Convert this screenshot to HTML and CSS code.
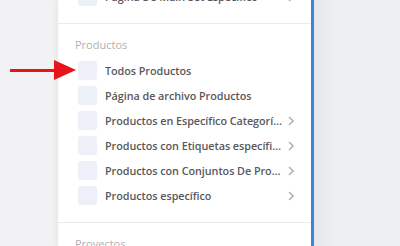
FILE: index.html
```html
<!DOCTYPE html>
<html>

<head>
    <title>Condiciones</title>
    <link rel="stylesheet" href="styles.css">
</head>

<body>
    <div class="gutter"></div>
    <div class="panel">
        <div class="section first">
            <div class="row">
                <span class="check"></span>
                <span class="label">Página De Main Set Específico</span>
                <svg class="chev" width="6" height="10" viewBox="0 0 6 10"><path d="M1 1l4 4-4 4" fill="none" stroke="#b4b4b8" stroke-width="1.6"/></svg>
            </div>
        </div>
        <div class="section">
            <div class="heading">Productos</div>
            <div class="row">
                <span class="check"></span>
                <span class="label">Todos Productos</span>
            </div>
            <div class="row">
                <span class="check"></span>
                <span class="label">Página de archivo Productos</span>
            </div>
            <div class="row">
                <span class="check"></span>
                <span class="label">Productos en Específico Categorías De Productos</span>
                <svg class="chev" width="6" height="10" viewBox="0 0 6 10"><path d="M1 1l4 4-4 4" fill="none" stroke="#b4b4b8" stroke-width="1.6"/></svg>
            </div>
            <div class="row">
                <span class="check"></span>
                <span class="label">Productos con Etiquetas específicas</span>
                <svg class="chev" width="6" height="10" viewBox="0 0 6 10"><path d="M1 1l4 4-4 4" fill="none" stroke="#b4b4b8" stroke-width="1.6"/></svg>
            </div>
            <div class="row">
                <span class="check"></span>
                <span class="label">Productos con Conjuntos De Productos</span>
                <svg class="chev" width="6" height="10" viewBox="0 0 6 10"><path d="M1 1l4 4-4 4" fill="none" stroke="#b4b4b8" stroke-width="1.6"/></svg>
            </div>
            <div class="row">
                <span class="check"></span>
                <span class="label">Productos específico</span>
                <svg class="chev" width="6" height="10" viewBox="0 0 6 10"><path d="M1 1l4 4-4 4" fill="none" stroke="#b4b4b8" stroke-width="1.6"/></svg>
            </div>
        </div>
        <div class="section">
            <div class="heading">Proyectos</div>
        </div>
    </div>
    <div class="backdrop"></div>

    <div class="arrow">
        <span class="shaft"></span>
        <span class="head"></span>
    </div>
</body>

</html>
```

FILE: styles.css
```css
body {
    margin: 0;
    height: 246px;
    overflow: hidden;
    display: flex;
    align-items: flex-start;
    background-color: #f2f2f4;
    font-family: "Open Sans", "Liberation Sans", sans-serif;
    position: relative;
}

.gutter {
    width: 58px;
    flex-shrink: 0;
}

.panel {
    width: 253px;
    height: 246px;
    overflow: hidden;
    flex-shrink: 0;
    background-color: #fff;
    border-right: 3px solid #3b87d8;
    box-shadow: -2px 0 6px rgba(0, 0, 0, 0.05);
}

.backdrop {
    flex: 1;
    height: 246px;
    background: linear-gradient(to right, #e6e7ea, #eeeff1 20px);
}

.section {
    padding: 13px 0 14px 0;
    border-bottom: 1px solid #ebebed;
}

.section.first {
    margin-top: -16px;
    padding: 0 0 14px 0;
}

.heading {
    padding-left: 17px;
    height: 16px;
    line-height: 16px;
    font-size: 11px;
    color: #b0b0b4;
    margin-bottom: 5px;
}

.row {
    height: 25px;
    display: flex;
    align-items: center;
    padding-left: 20px;
    padding-right: 17px;
}

.check {
    width: 19px;
    height: 19px;
    border-radius: 3px;
    background-color: #edf0f8;
    flex-shrink: 0;
    margin-right: 8px;
}

.label {
    flex: 1;
    min-width: 0;
    white-space: nowrap;
    overflow: hidden;
    text-overflow: ellipsis;
    font-size: 10.8px;
    font-weight: 600;
    letter-spacing: -0.05px;
    color: #58585c;
    padding-right: 2px;
}

.chev {
    flex-shrink: 0;
}

.arrow {
    position: absolute;
    left: 10px;
    top: 60px;
    display: flex;
    align-items: center;
}

.shaft {
    width: 46px;
    height: 3px;
    background-color: #e8141b;
}

.head {
    width: 0;
    height: 0;
    border-top: 10px solid transparent;
    border-bottom: 10px solid transparent;
    border-left: 22px solid #e8141b;
    margin-left: -2px;
}
```
